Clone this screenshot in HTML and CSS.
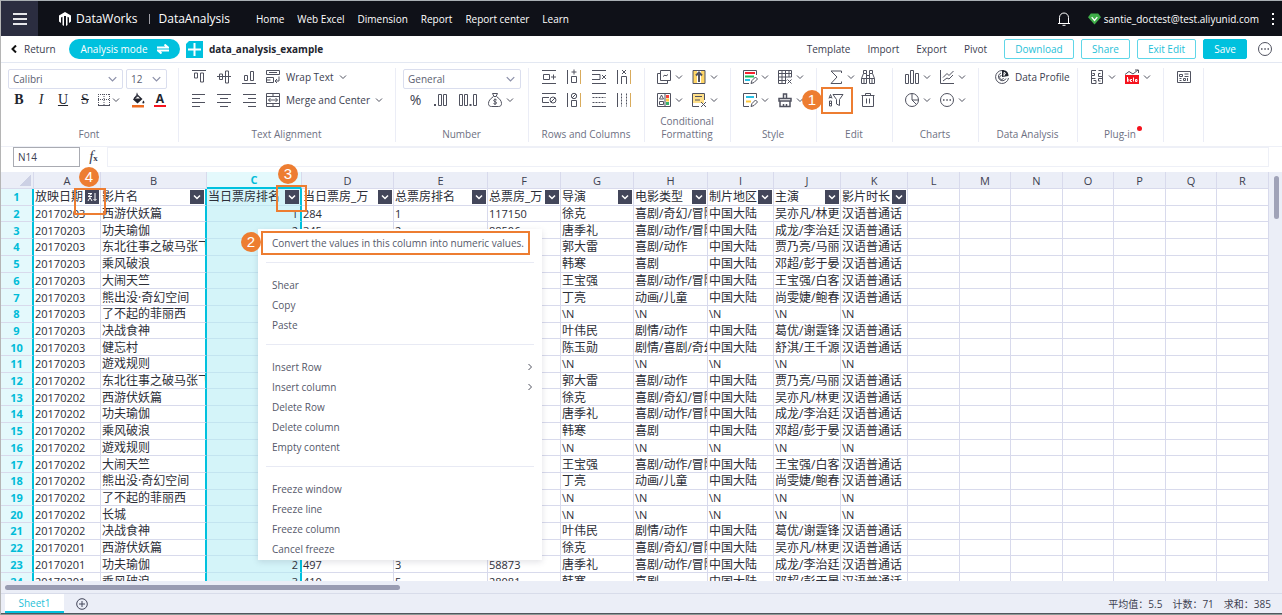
FILE: index.html
```
<!DOCTYPE html>
<html lang="en">
<head>
  <meta charset="UTF-8">
  <meta name="viewport" content="width=device-width, initial-scale=1.0">
  <title>DataWorks | DataAnalysis</title>
  <link rel="stylesheet" href="styles.css">
</head>
<body>
  <!-- icon set -->
  <svg class="sprite" aria-hidden="true">
    <symbol id="chev" viewBox="0 0 8 8"><path d="M1 2.5l3 3 3-3"/></symbol>
    <symbol id="border" viewBox="0 0 16 16"><path stroke-dasharray="1 1" d="M2 2.5h12M2 7.5h12M2.500 2v12M8 2v12M13.500 2v12"/><path d="M2 13.500h12"/></symbol>
    <symbol id="fill" viewBox="0 0 16 16"><path class="solid" d="M7 2l5.500 5-5 4.500L3 7.500z"/><path d="M7 5V.8M4 6l4-4" /><path class="paper" d="M5 6.500h5L8 4.500z"/><path class="solid" d="M13.500 8.500c1.500 2 1 3-.3 3s-1-1.500.3-3z"/><path fill="#ed6a1f" stroke="none" d="M2 13h12v2.500H2z"/></symbol>
    <symbol id="v-top" viewBox="0 0 16 16"><path d="M1 1.500h14M3.500 4v5h3V4zM9.500 4v9h3V4z"/></symbol>
    <symbol id="v-mid" viewBox="0 0 16 16"><path d="M1 7.500h14M3.500 5v5.500h3V5zM9.500 2v12h3V2z"/></symbol>
    <symbol id="v-bot" viewBox="0 0 16 16"><path d="M1 14.500h14M3.500 6.500v5h3v-5zM9.500 2.500v9h3v-9z"/></symbol>
    <symbol id="left" viewBox="0 0 16 16"><path d="M1 2.500h13M1 6.500h8M1 10.500h13M1 14.500h8"/></symbol>
    <symbol id="center" viewBox="0 0 16 16"><path d="M1 2.500h14M4 6.500h8M1 10.500h14M4 14.500h8"/></symbol>
    <symbol id="right" viewBox="0 0 16 16"><path d="M2 2.500h13M7 6.500h8M2 10.500h13M7 14.500h8"/></symbol>
    <symbol id="wrap" viewBox="0 0 16 16"><path d="M1.500 1.500h13v4h-13zM4 3.500h8M1.500 8.500h7v5h-7zM1.500 11h4M14 7.500V12h-4M12 10l-2 2 2 2"/></symbol>
    <symbol id="merge" viewBox="0 0 16 16"><path d="M1.500 1.500h13v13h-13zM1.500 4.500h13M1.500 11.500h13M8 1.500v3M8 11.500v3M3.500 8h9M5.500 6l-2 2 2 2M10.500 6l2 2-2 2"/></symbol>
    <symbol id="decimal" viewBox="0 0 16 16"><path stroke-width="2" d="M1 13h2"/><path d="M5.500 2.500h3v11h-3zM10.500 2.500h3v11h-3z"/></symbol>
    <symbol id="decimal2" viewBox="0 0 20 16"><path d="M1.500 2.500h3v11h-3zM6.500 2.500h3v11h-3zM15.500 2.500h3v11h-3z"/><path stroke-width="2" d="M11.500 13h2"/></symbol>
    <symbol id="money" viewBox="0 0 16 16"><path d="M5.500 1.500h5l-1.500 3h-2zM6.500 4.500C3 7 1.500 9 1.500 11.500c0 2 1 3 3 3h7c2 0 3-1 3-3 0-2.500-1.500-4.500-5-7M9.700 8C8.500 7 6.500 7.500 6.700 8.700 7 10 9.500 9.300 9.500 11c0 1.200-2 1.300-3 .5M8 6.500v6.500"/></symbol>
    <symbol id="row-add" viewBox="0 0 16 16"><path d="M1 1.500h14M1 14.500h14M2.500 5.500h6v5h-6zM10 8h5M12.500 5.500v5"/></symbol>
    <symbol id="col-add" viewBox="0 0 16 16"><path d="M1.500 1v14M5.500 7.500h5v6h-5zM8 .5v5M5.500 3h5"/><path class="gold" d="M14.500 1v14"/></symbol>
    <symbol id="row-del" viewBox="0 0 16 16"><path d="M1 1.500h14M1 14.500h14M1 5.500h8v5H1M11 6l4 4M15 6l-4 4"/></symbol>
    <symbol id="col-del" viewBox="0 0 16 16"><path d="M1.500 1v14M5.500 15V7.500h5V15M6 1l4 4M10 1L6 5"/><path class="gold" d="M14.500 1v14"/></symbol>
    <symbol id="row-hide" viewBox="0 0 16 16"><path d="M1 1.500h14M1 14.500h14M8 5.500H1.500v5H8"/><circle cx="12" cy="8" r="3"/><path d="M10 10l4-4"/></symbol>
    <symbol id="col-hide" viewBox="0 0 16 16"><path d="M1.500 1v14M5.500 8.500h5v6h-5z"/><circle cx="8" cy="4" r="2.700"/><path d="M6 6l4-4"/><path class="gold" d="M14.500 1v14"/></symbol>
    <symbol id="row-show" viewBox="0 0 16 16"><path d="M1 1.500h14M1 14.500h14"/><path stroke-dasharray="2 1" d="M1.500 5.500h13M1.500 10.500h13"/></symbol>
    <symbol id="col-show" viewBox="0 0 16 16"><path d="M1.500 1v14"/><path stroke-dasharray="2 1" d="M5.500 1.500v13M10.500 1.500v13"/><path class="gold" d="M14.500 1v14"/></symbol>
    <symbol id="cond" viewBox="0 0 16 16"><path d="M4.500 1.500h10v10h-10zM4 4.500H1.500v10h10V12M7 7.500l2-1.500 1 1L12 5.500"/></symbol>
    <symbol id="rule" viewBox="0 0 16 16"><path fill="#ffd666" stroke="none" d="M2 2h4v12H2zM10 2h4v12h-4z"/><path d="M2 1.500h12v13H2z"/><path stroke-width="2" d="M8 13V4M5 6.500L8 3.500l3 3"/></symbol>
    <symbol id="scale" viewBox="0 0 16 16"><path d="M1.500 1.500h13v13h-13zM3.500 7L5.500 3l2 4zM3.500 9.500h4v3h-4zM9 2v12"/><path fill="#f5433c" stroke="none" d="M10 3h3v3h-3z"/><path fill="#ffc83d" stroke="none" d="M10 6.500h3v3h-3z"/><path fill="#38b26c" stroke="none" d="M10 10h3v3h-3z"/></symbol>
    <symbol id="rule-del" viewBox="0 0 16 16"><path fill="#ffe08a" stroke="none" d="M2 2h11v9H2z"/><path d="M13.500 8V1.500h-12v13H8M4 4.500h7M4 8h5M10 10l5 5M15 10l-5 5"/></symbol>
    <symbol id="style" viewBox="0 0 16 16"><path d="M14.500 6V1.500h-13v13H7"/><path stroke="#f5232d" stroke-width="2" d="M3 4h10"/><path stroke="#19b955" stroke-width="2" d="M3 7.500h9"/><path stroke="#28bfe3" stroke-width="2" d="M3 11h5"/><path d="M9 14.500l1-3 3.500-3.500 2 2-3.500 3.500z"/></symbol>
    <symbol id="style2" viewBox="0 0 16 16"><path d="M14.500 6V1.500h-13v13H7"/><path stroke="#28bfe3" stroke-width="2" d="M4 5h8"/><path stroke="#ffc83d" stroke-width="2" d="M4 9.500h5"/><path d="M9 14.500l1-3 3.500-3.500 2 2-3.500 3.500z"/></symbol>
    <symbol id="tbl" viewBox="0 0 16 16"><path d="M14.500 8V1.500h-13v13H9M1.500 4.500h13M1.500 8h13M1.500 11.500h8M5 1.500v13M8.500 1.500v13M12 1.500V8M10.500 10.500l4 4M14.500 10.500l-4 4"/></symbol>
    <symbol id="brush" viewBox="0 0 16 16"><path stroke-width="1.500" d="M6.500 6V2h3v4M2 9V6.500h12V9zM3 9v5.500h10V9M6.500 14.500V12M9.500 14.500V12"/></symbol>
    <symbol id="sum" viewBox="0 0 16 16"><path d="M13.500 4V2H3l6 6-6 6.500h10.500v-2"/></symbol>
    <symbol id="find" viewBox="0 0 16 16"><path d="M3.500 1.500h3v3h-3zM9.500 1.500h3v3h-3zM3.500 4.500l-2 5v5h5v-10M12.500 4.500l2 5v5h-5v-10M6.500 6.500h3M6.500 9.500h3M1.500 9.500h5M9.500 9.500h5M4 10v4M12 10v4"/></symbol>
    <symbol id="filter" viewBox="0 0 16 16"><path d="M5 2.500h10L11.500 7.500v6l-3-1.500V7.500zM1 6.500l1.500-4 1.500 4M1.500 5.500h2M1.500 9h2v5h-2zM1.500 11.500h2"/></symbol>
    <symbol id="trash" viewBox="0 0 16 16"><path d="M1.500 3.500h13M5.500 3.500v-2h5v2M2.500 3.500v11h11v-11M6.500 6.500v5M9.500 6.500v5"/></symbol>
    <symbol id="bars" viewBox="0 0 16 16"><path d="M1.500 5.500h3v9h-3zM6.500 1.500h3v13h-3zM11.500 4.500h3v10h-3z"/></symbol>
    <symbol id="lines" viewBox="0 0 16 16"><path d="M1.500 1v13.500H15M4 8.500l4-4 2 2 4.500-4.500M4 12l4-3 2 1 4-4"/></symbol>
    <symbol id="pie" viewBox="0 0 16 16"><circle cx="8" cy="8" r="6.500"/><path d="M8 1.500V8h6.500M8 8l4.500 4.500"/></symbol>
    <symbol id="more" viewBox="0 0 16 16"><circle cx="8" cy="8" r="6.500"/><path stroke-width="1.500" d="M4 8h1.500M7.300 8h1.500M10.500 8H12"/></symbol>
    <symbol id="profile" viewBox="0 0 16 16"><path d="M8 1.500A6.500 6.500 0 1 0 14.500 9M7 4a4 4 0 1 0 5 5.500M7.500 6.500A2 2 0 1 0 9.500 9"/><path class="solid" d="M8 8V1c4 0 6.500 2 6.500 6z"/><path stroke="#fff" d="M10 7V3.500c2 0 2 2 0 2"/></symbol>
    <symbol id="plugin" viewBox="0 0 16 16"><path d="M7 1.500H2.500v5h3v-2h-2M2.500 6.500v8H7v-3H4.500M9.500 1.500h4v6h-4v-3h2M13.500 7.500v3M9.500 14.500h4v-5h-4v2.500h2M2.500 9.500h4"/></symbol>
    <symbol id="beta" viewBox="0 0 16 16"><path d="M1 5.500l4-3 4 2.500 5-4M11 1h3.500v3"/><path fill="#f5121d" stroke="none" d="M1 6h14v9H1z"/><path stroke="#fff" d="M3.500 8v4.500c2 0 2-2.500 0-2.500M8 10.500H6.500v2H8M9.500 8.500v4M11.500 12.500v-2H13v2z"/></symbol>
    <symbol id="panel" viewBox="0 0 16 16"><path d="M1.500 2.500h13v11h-13zM3.500 5.500h3v2h-3zM8.500 5h4M8.500 7.500h4M3.500 9.500h2M3.500 11.500h2M7.500 9.500h2v2h-2zM11.500 9v3"/></symbol>
  </svg>

  <header class="topbar">
    <button class="burger" aria-label="Menu"><i></i><i></i><i></i></button>
    <div class="brand">
      <svg class="logo" viewBox="0 0 14 14"><path d="M1 3.500L7 0l6 3.500v6L11 11V5.500L9.500 4.800V13L8 14V4H6v10l-1.500-1V4.800L3 5.500V11L1 9.500z"/></svg>
      <span>DataWorks</span><i></i><span>DataAnalysis</span>
    </div>
    <nav>
      <a href="#">Home</a>
      <a href="#">Web Excel</a>
      <a href="#">Dimension</a>
      <a href="#">Report</a>
      <a href="#">Report center</a>
      <a href="#">Learn</a>
    </nav>
    <div class="user">
      <svg class="bell" viewBox="0 0 12 14"><path d="M0 11.500h12M1.500 11V5.500a4.500 4.500 0 0 1 9 0V11M4.500 13.300h3"/></svg>
      <svg class="gem" viewBox="0 0 14 12"><path fill="#3fae49" d="M3 0h8l3 4-7 8-7-8z"/><path fill="none" stroke="#fff" stroke-width="1.500" d="M4 4l3 3.500L10 4"/></svg>
      <span>santie_doctest@test.aliyunid.com</span>
      <svg class="dots" viewBox="0 0 4 14"><path d="M1 1h2v2H1zM1 6h2v2H1zM1 11h2v2H1z"/></svg>
    </div>
  </header>

  <div class="filebar">
    <a class="return" href="#"><svg viewBox="0 0 6 8"><path d="M5 .5L1.500 4 5 7.500"/></svg>Return</a>
    <button class="mode">Analysis mode <svg viewBox="0 0 12 10"><path d="M0 3.500h11L7.500 .5M12 6.500H1l3.500 3"/></svg></button>
    <svg class="sheet-icon" viewBox="0 0 17 17"><path fill="#00c1de" d="M3 0h14v17H0V3z"/><path stroke="#fff" stroke-width="2" d="M8.500 2v13M2 8.500h13"/></svg>
    <h1>data_analysis_example</h1>
    <div class="actions">
      <a href="#">Template</a>
      <a href="#">Import</a>
      <a href="#">Export</a>
      <a href="#">Pivot</a>
      <button class="btn download">Download</button>
      <button class="btn">Share</button>
      <button class="btn exit">Exit Edit</button>
      <button class="btn primary">Save</button>
      <button class="more" aria-label="More"><svg class="ic"><use href="#more"/></svg></button>
    </div>
  </div>

  <div class="ribbon">
    <section class="group g-font">
      <div class="row fields">
        <label class="select family"><select aria-label="Font family"><option>Calibri</option></select><svg><use href="#chev"/></svg></label>
        <label class="select size"><select aria-label="Font size"><option>12</option></select><svg><use href="#chev"/></svg></label>
      </div>
      <div class="row letters">
        <button class="tool"><b>B</b></button>
        <button class="tool"><em>I</em></button>
        <button class="tool"><u>U</u></button>
        <button class="tool"><s>S</s></button>
        <button class="tool drop"><svg class="ic"><use href="#border"/></svg><svg class="chev"><use href="#chev"/></svg></button>
        <button class="tool"><svg class="ic"><use href="#fill"/></svg></button>
        <button class="tool"><span class="color">A</span></button>
      </div>
      <h2>Font</h2>
    </section>
    <section class="group g-align">
      <div class="row">
        <button class="tool"><svg class="ic"><use href="#v-top"/></svg></button>
        <button class="tool"><svg class="ic"><use href="#v-mid"/></svg></button>
        <button class="tool"><svg class="ic"><use href="#v-bot"/></svg></button>
        <button class="tool text"><svg class="ic"><use href="#wrap"/></svg>Wrap Text<svg class="chev"><use href="#chev"/></svg></button>
      </div>
      <div class="row">
        <button class="tool"><svg class="ic"><use href="#left"/></svg></button>
        <button class="tool"><svg class="ic"><use href="#center"/></svg></button>
        <button class="tool"><svg class="ic"><use href="#right"/></svg></button>
        <button class="tool text"><svg class="ic"><use href="#merge"/></svg>Merge and Center<svg class="chev"><use href="#chev"/></svg></button>
      </div>
      <h2>Text Alignment</h2>
    </section>
    <section class="group g-number">
      <div class="row fields">
        <label class="select format"><select aria-label="Number format"><option>General</option></select><svg><use href="#chev"/></svg></label>
      </div>
      <div class="row">
        <button class="tool percent">%</button>
        <button class="tool"><svg class="ic"><use href="#decimal"/></svg></button>
        <button class="tool long"><svg class="ic wide"><use href="#decimal2"/></svg></button>
        <button class="tool drop"><svg class="ic"><use href="#money"/></svg><svg class="chev"><use href="#chev"/></svg></button>
      </div>
      <h2>Number</h2>
    </section>
    <section class="group g-rows">
      <div class="row">
        <button class="tool"><svg class="ic"><use href="#row-add"/></svg></button>
        <button class="tool"><svg class="ic"><use href="#col-add"/></svg></button>
        <button class="tool"><svg class="ic"><use href="#row-del"/></svg></button>
        <button class="tool"><svg class="ic"><use href="#col-del"/></svg></button>
      </div>
      <div class="row">
        <button class="tool"><svg class="ic"><use href="#row-hide"/></svg></button>
        <button class="tool"><svg class="ic"><use href="#col-hide"/></svg></button>
        <button class="tool"><svg class="ic"><use href="#row-show"/></svg></button>
        <button class="tool"><svg class="ic"><use href="#col-show"/></svg></button>
      </div>
      <h2>Rows and Columns</h2>
    </section>
    <section class="group g-pair">
      <div class="row">
        <button class="tool drop"><svg class="ic"><use href="#cond"/></svg><svg class="chev"><use href="#chev"/></svg></button>
        <button class="tool drop"><svg class="ic"><use href="#rule"/></svg><svg class="chev"><use href="#chev"/></svg></button>
      </div>
      <div class="row">
        <button class="tool drop"><svg class="ic"><use href="#scale"/></svg><svg class="chev"><use href="#chev"/></svg></button>
        <button class="tool drop"><svg class="ic"><use href="#rule-del"/></svg><svg class="chev"><use href="#chev"/></svg></button>
      </div>
      <h2>Conditional<br>Formatting</h2>
    </section>
    <section class="group g-pair">
      <div class="row">
        <button class="tool drop"><svg class="ic"><use href="#style"/></svg><svg class="chev"><use href="#chev"/></svg></button>
        <button class="tool drop"><svg class="ic"><use href="#tbl"/></svg><svg class="chev"><use href="#chev"/></svg></button>
      </div>
      <div class="row">
        <button class="tool drop"><svg class="ic"><use href="#style2"/></svg><svg class="chev"><use href="#chev"/></svg></button>
        <button class="tool drop"><svg class="ic"><use href="#brush"/></svg><svg class="chev"><use href="#chev"/></svg></button>
      </div>
      <h2>Style</h2>
    </section>
    <section class="group g-edit">
      <div class="row">
        <button class="tool drop"><svg class="ic"><use href="#sum"/></svg><svg class="chev"><use href="#chev"/></svg></button>
        <button class="tool drop"><svg class="ic"><use href="#find"/></svg></button>
      </div>
      <div class="row">
        <button class="tool drop filter-btn"><svg class="ic"><use href="#filter"/></svg><span class="frame"></span><span class="step">1</span></button>
        <button class="tool drop"><svg class="ic"><use href="#trash"/></svg></button>
      </div>
      <h2>Edit</h2>
    </section>
    <section class="group g-pair">
      <div class="row">
        <button class="tool drop"><svg class="ic"><use href="#bars"/></svg><svg class="chev"><use href="#chev"/></svg></button>
        <button class="tool drop"><svg class="ic"><use href="#lines"/></svg><svg class="chev"><use href="#chev"/></svg></button>
      </div>
      <div class="row">
        <button class="tool drop"><svg class="ic"><use href="#pie"/></svg><svg class="chev"><use href="#chev"/></svg></button>
        <button class="tool drop"><svg class="ic"><use href="#more"/></svg><svg class="chev"><use href="#chev"/></svg></button>
      </div>
      <h2>Charts</h2>
    </section>
    <section class="group g-data">
      <div class="row">
        <button class="tool text"><svg class="ic"><use href="#profile"/></svg>Data Profile</button>
      </div>
      <h2>Data Analysis</h2>
    </section>
    <section class="group g-pair">
      <div class="row">
        <button class="tool drop"><svg class="ic"><use href="#plugin"/></svg><svg class="chev"><use href="#chev"/></svg></button>
        <button class="tool drop"><svg class="ic"><use href="#beta"/></svg><svg class="chev"><use href="#chev"/></svg></button>
      </div>
      <h2><span class="new">Plug-in</span></h2>
    </section>
    <section class="group g-last">
      <div class="row">
        <button class="tool"><svg class="ic"><use href="#panel"/></svg></button>
      </div>
    </section>
  </div>

  <div class="formula">
    <input class="cell-name" value="N14" aria-label="Cell">
    <span class="fx"><i>f</i><b>x</b></span>
    <input class="cell-value" value="" aria-label="Formula">
  </div>

  <main class="sheet">
    <div class="viewport">
      <table id="grid"></table>
    </div>
    <div class="vscroll"><span></span></div>

    <ul class="menu">
      <li class="first">Convert the values in this column into numeric values.<span class="frame"></span><span class="step">2</span></li>
      <li class="sep"></li>
      <li>Shear</li>
      <li>Copy</li>
      <li>Paste</li>
      <li class="sep"></li>
      <li class="sub">Insert Row<svg class="chev"><use href="#chev"/></svg></li>
      <li class="sub">Insert column<svg class="chev"><use href="#chev"/></svg></li>
      <li>Delete Row</li>
      <li>Delete column</li>
      <li>Empty content</li>
      <li class="sep"></li>
      <li>Freeze window</li>
      <li>Freeze line</li>
      <li>Freeze column</li>
      <li>Cancel freeze</li>
    </ul>

    <div class="callout c3"><span class="step">3</span></div>
    <div class="callout c4"><span class="step">4</span></div>
  </main>

  <div class="hscroll"><span></span></div>
  <footer class="tabs">
    <a class="tab" href="#">Sheet1</a>
    <button class="add" aria-label="Add sheet"><svg viewBox="0 0 12 12"><circle cx="6" cy="6" r="5.300"/><path d="M6 3v6M3 6h6"/></svg></button>
    <div class="totals"><span>平均值：5.5</span><span>计数：71</span><span>求和：385</span></div>
  </footer>

  <script src="script.js"></script>
</body>
</html>
```

FILE: styles.css
```
* {
  box-sizing: border-box;
}
body {
  margin: 0;
  height: 100vh;
  display: flex;
  flex-direction: column;
  overflow: hidden;
  font-family: "Open Sans", "Noto Sans CJK SC", sans-serif;
  font-size: 10px;
  line-height: 16px;
  color: #3c4050;
  background: #fff;
  border-top: 1px solid #a9afb3;
  border-left: 1px solid #b5b5b5;
  border-bottom: 1px solid #8d9a96;
}
button, input, select {
  font: inherit;
  color: inherit;
}
button {
  padding: 0;
  border: 0;
  background: none;
}
a {
  color: inherit;
  text-decoration: none;
}
.sprite {
  position: absolute;
  width: 0;
  height: 0;
}

/* top bar */
.topbar {
  height: 35px;
  flex: none;
  display: flex;
  align-items: center;
  background: #0f1118;
  color: #fff;
}
.burger {
  width: 37px;
  height: 35px;
  background: #2b2d40;
  display: flex;
  flex-direction: column;
  align-items: center;
  justify-content: center;
  gap: 3px;
}
.burger i {
  width: 14px;
  height: 2px;
  background: #e6e6ea;
}
.brand {
  display: flex;
  align-items: center;
  margin-left: 20px;
  width: 198px;
  font-size: 12px;
  font-weight: 500;
}
.logo {
  width: 14px;
  height: 14px;
  fill: #fff;
  margin-right: 4px;
}
.brand i {
  width: 1px;
  height: 10px;
  background: #a0a0a8;
  margin: 0 9px 0 11px;
}
.topbar nav {
  display: flex;
  gap: 13px;
}
.user {
  margin-left: auto;
  display: flex;
  align-items: center;
  padding-right: 7px;
}
.bell {
  width: 12px;
  height: 14px;
  fill: none;
  stroke: #fff;
  margin-right: 18px;
}
.gem {
  width: 13px;
  height: 12px;
  margin-right: 3px;
}
.dots {
  width: 4px;
  height: 14px;
  fill: #fff;
  margin-left: 12px;
}

/* file bar */
.filebar {
  height: 27px;
  flex: none;
  display: flex;
  align-items: center;
  border-bottom: 1px solid #e3e8f2;
}
.return {
  width: 68px;
  display: flex;
  align-items: center;
  padding-left: 10px;
}
.return svg {
  width: 6px;
  height: 8px;
  margin-right: 7px;
  fill: none;
  stroke: #111;
  stroke-width: 2;
}
.mode {
  width: 111px;
  height: 20px;
  border-radius: 10px;
  background: #00c1de;
  color: #fff;
  display: flex;
  align-items: center;
  justify-content: center;
  gap: 9px;
}
.mode svg {
  width: 12px;
  height: 10px;
  fill: none;
  stroke: #fff;
  stroke-width: 2;
}
.sheet-icon {
  width: 17px;
  height: 17px;
  margin: 0 6px;
}
.filebar h1 {
  margin: 0;
  font-size: 10px;
  font-weight: 700;
  color: #22242e;
}
.actions {
  margin-left: auto;
  padding-right: 9px;
  display: flex;
  align-items: center;
}
.actions a {
  margin-right: 17px;
}
.actions .btn {
  height: 20px;
  width: 49px;
  margin-right: 7px;
  border: 1px solid #5fd6e8;
  border-radius: 2px;
  color: #1fbfd8;
}
.actions .download {
  width: 70px;
}
.actions .exit {
  width: 59px;
}
.actions .primary {
  width: 44px;
  margin-right: 10px;
  background: #00c1de;
  border-color: #00c1de;
  color: #fff;
}
.actions .more {
  display: flex;
}

/* ribbon */
.ribbon {
  flex: none;
  display: flex;
  height: 84px;
  padding: 5px 0 4px;
  border-bottom: 1px solid #eef0f7;
}
.group {
  flex: none;
  position: relative;
  display: flex;
  flex-direction: column;
  gap: 5px;
  padding: 0 0 0 11px;
  border-right: 1px solid #ebedf6;
}
.group h2 {
  margin: auto 0 1px -11px;
  padding-right: 1px;
  font-size: 10px;
  font-weight: 400;
  line-height: 13px;
  text-align: center;
  color: #6d7082;
}
.row {
  display: flex;
  height: 18px;
  align-items: center;
}
.fields {
  height: 22px;
  margin-bottom: -4px;
}
.tool {
  width: 25px;
  height: 18px;
  display: flex;
  align-items: center;
  justify-content: center;
}
.tool.drop {
  width: 35px;
  justify-content: flex-start;
  gap: 3px;
}
.tool.text {
  width: auto;
  gap: 5px;
  margin-left: 4px;
}
.ic {
  flex: none;
  width: 16px;
  height: 16px;
  fill: none;
  stroke: #50525f;
}
.ic.wide {
  width: 20px;
}
.solid {
  fill: #22242e;
  stroke: none;
}
.paper {
  fill: #fff;
  stroke: none;
}
.gold {
  stroke: #d9ab5c;
}
.chev {
  flex: none;
  width: 8px;
  height: 8px;
  fill: none;
  stroke: #50525f;
}
.select {
  position: relative;
  display: flex;
}
.select select {
  width: 100%;
  height: 20px;
  padding: 0 4px;
  appearance: none;
  border: 1px solid #dadeee;
  border-radius: 2px;
  background: #fff;
  color: #5b5e70;
}
.select svg {
  position: absolute;
  right: 5px;
  top: 5px;
  width: 11px;
  height: 10px;
  fill: none;
  stroke: #8b8fa8;
}
.g-font {
  width: 178px;
  padding-left: 7px;
}
.g-font h2 {
  margin-left: -7px;
}
.g-font .family {
  width: 115px;
  margin-right: 3px;
}
.g-font .size {
  width: 41px;
}
.letters .tool {
  width: 22px;
  font-family: "Liberation Serif", serif;
  font-size: 14px;
  color: #22242e;
}
.letters .drop {
  width: 31px;
  gap: 0;
}
.color {
  width: 12px;
  font-family: "Open Sans", sans-serif;
  font-size: 12px;
  font-weight: 700;
  line-height: 12px;
  border-bottom: 2px solid #f5121d;
}
.g-align {
  width: 217px;
}
.g-align, .g-rows, .g-number {
  padding-left: 7px;
}
.g-align h2, .g-rows h2, .g-number h2 {
  margin-left: -7px;
}
.g-number {
  width: 133px;
}
.g-number .format {
  width: 118px;
}
.tool.percent {
  font-size: 14px;
}
.tool.long {
  width: 30px;
  margin-right: 4px;
}
.g-rows {
  width: 116px;
}
.g-pair {
  width: 86px;
}
.g-edit {
  width: 76px;
}
.g-data {
  width: 99px;
}
.g-last {
  width: 40px;
  padding-left: 7px;
}
.new {
  position: relative;
}
.new::after {
  content: "";
  position: absolute;
  right: -6px;
  top: -1px;
  width: 5px;
  height: 5px;
  border-radius: 50%;
  background: #f5121d;
}

/* numbered steps */
.frame, .callout {
  position: absolute;
  border: 2px solid #ed7d31;
}
.step {
  position: absolute;
  width: 20px;
  height: 20px;
  border-radius: 50%;
  background: #ed7d31;
  color: #fff;
  font-family: "Liberation Sans", sans-serif;
  font-size: 15px;
  line-height: 20px;
  text-align: center;
}
.filter-btn {
  position: relative;
}
.filter-btn .frame {
  left: -7px;
  top: -4px;
  width: 32px;
  height: 27px;
}
.filter-btn .step {
  left: -26px;
  top: -1px;
}

/* formula bar */
.formula {
  flex: none;
  display: flex;
  align-items: center;
  height: 25px;
  padding: 0 13px 5px 12px;
}
.formula input {
  height: 20px;
  border: 1px solid #eef0f7;
  padding: 0 4px;
  background: #fff;
}
.formula .cell-name {
  width: 67px;
  border: 1px solid #a9abb2;
}
.fx {
  width: 27px;
  text-align: center;
  font-family: "Liberation Serif", serif;
  font-size: 15px;
}
.fx b {
  font-size: 9px;
}
.formula .cell-value {
  flex: 1;
}

/* sheet */
.sheet {
  flex: 1;
  min-height: 0;
  position: relative;
  display: flex;
  background: #ebeef7;
}
.viewport {
  flex: 1;
  overflow: hidden;
}
#grid {
  table-layout: fixed;
  border-collapse: separate;
  border-spacing: 0;
  height: 418px;
  width: 1px;
  background: #fff;
  font-size: 11px;
}
#grid th, #grid td {
  padding: 0;
  line-height: 14px;
  border-right: 1px solid #d8daec;
  border-bottom: 1px solid #d8daec;
  white-space: nowrap;
  overflow: hidden;
}
#grid th {
  padding-top: 1px;
}
#grid thead th {
  background: #ebeef7;
  font-weight: 400;
}
#grid thead .corner {
  background: linear-gradient(135deg, transparent 50%, #ccd0e4 50%) no-repeat 18px 2px / 12px 12px, #ebeef7;
}
#grid tbody th {
  background: #e4f9fc;
  color: #00bcd8;
  font-weight: 700;
  border-right: 2px solid #00c1de;
}
#grid td {
  padding-top: 1px;
  padding-left: 1px;
  color: #2c2e38;
  font-size: 12px;
}
#grid td.num {
  font-size: 11px;
}
#grid .sel {
  background: #d4f4f9;
  border-right: 2px solid #00c1de;
  border-bottom-color: #c3e4f0;
  text-align: right;
  padding-right: 2px;
}
#grid td.sel.title {
  padding-right: 0;
}
#grid thead .sel {
  background: #e4f9fc;
  color: #00bcd8;
  font-weight: 700;
  text-align: center;
  padding-right: 0;
  border-right: 1px solid #d8daec;
  border-bottom: 2px solid #00c1de;
}
#grid .before-sel {
  border-right: 2px solid #00c1de;
}
.head {
  display: flex;
  align-items: center;
  height: 14px;
}
.head span {
  flex: 1;
  text-align: left;
  white-space: nowrap;
  overflow: hidden;
}
.head button {
  flex: none;
  width: 14px;
  height: 14px;
  margin-right: 1px;
  background: #43465a;
  display: flex;
  align-items: center;
  justify-content: center;
}
.head svg {
  width: 10px;
  height: 10px;
  fill: none;
  stroke: #fff;
}
.vscroll {
  width: 12px;
  padding: 4px 4px;
}
.vscroll span {
  display: block;
  width: 5px;
  height: 43px;
  border-radius: 3px;
  background: #a0a3b8;
}
.hscroll {
  flex: none;
  height: 12px;
  padding: 4px;
  background: #ebeef7;
}
.hscroll span {
  display: block;
  width: 31%;
  height: 5px;
  border-radius: 3px;
  background: #999cb2;
}
.c3 {
  left: 275px;
  top: 13px;
  width: 31px;
  height: 27px;
}
.c3 .step {
  left: 0;
  top: -23px;
}
.c4 {
  left: 73px;
  top: 16px;
  width: 32px;
  height: 27px;
}
.c4 .step {
  left: 3px;
  top: -23px;
}

/* context menu */
.menu {
  position: absolute;
  left: 257px;
  top: 57px;
  width: 284px;
  margin: 0;
  padding: 4px 8px 1px;
  list-style: none;
  background: #fff;
  box-shadow: 0 2px 6px rgba(60, 60, 90, 0.15);
  color: #55586a;
}
.menu li {
  position: relative;
  height: 20px;
  line-height: 20px;
  padding-left: 6px;
  white-space: nowrap;
}
.menu .sep {
  height: 22px;
  padding: 0;
}
.menu .sep::before {
  content: "";
  display: block;
  padding-top: 9px;
  border-bottom: 1px solid #e8eaf4;
}
.menu .sub {
  display: flex;
  align-items: center;
  justify-content: space-between;
}
.menu .sub .chev {
  transform: rotate(-90deg);
}
.menu .frame {
  left: -5px;
  top: -2px;
  width: 269px;
  height: 24px;
}
.menu .step {
  left: -25px;
  top: -1px;
}

/* sheet tabs */
.tabs {
  flex: none;
  height: 21px;
  display: flex;
  align-items: center;
  padding: 0 11px 0 4px;
  background: #ebeef7;
  border-top: 1px solid #d8dcea;
  border-bottom: 1px solid #50565e;
}
.tab {
  width: 59px;
  height: 19px;
  line-height: 19px;
  text-align: center;
  background: #fff;
  color: #1fbfd8;
  border-bottom: 2px solid #00c1de;
}
.add {
  width: 12px;
  height: 12px;
  margin-left: 12px;
}
.add svg {
  display: block;
  fill: none;
  stroke: #43465a;
}
.totals {
  margin-left: auto;
  display: flex;
  gap: 10px;
}
```

FILE: script.js
```
const widths = [33, 67, 106, 95, 92, 94, 73, 73, 74, 66, 67, 67, 52, 51, 52, 51, 52, 51, 52];
const letters = 'ABCDEFGHIJKLMNOPQR'.split('');
const heads = ['放映日期', '影片名', '当日票房排名', '当日票房_万', '总票房排名', '总票房_万', '导演', '电影类型', '制片地区', '主演', '影片时长'];

// director, genre, region, cast, language
const films = {
  '西游伏妖篇': ['徐克', '喜剧/奇幻/冒险', '中国大陆', '吴亦凡/林更新', '汉语普通话'],
  '功夫瑜伽': ['唐季礼', '喜剧/动作/冒险', '中国大陆', '成龙/李治廷', '汉语普通话'],
  '东北往事之破马张飞': ['郭大雷', '喜剧/动作', '中国大陆', '贾乃亮/马丽', '汉语普通话'],
  '乘风破浪': ['韩寒', '喜剧', '中国大陆', '邓超/彭于晏', '汉语普通话'],
  '大闹天竺': ['王宝强', '喜剧/动作/冒险', '中国大陆', '王宝强/白客', '汉语普通话'],
  '熊出没·奇幻空间': ['丁亮', '动画/儿童', '中国大陆', '尚雯婕/鲍春来', '汉语普通话'],
  '决战食神': ['叶伟民', '剧情/动作', '中国大陆', '葛优/谢霆锋', '汉语普通话'],
  '健忘村': ['陈玉勋', '剧情/喜剧/奇幻', '中国大陆', '舒淇/王千源', '汉语普通话']
};
const none = ['\\N', '\\N', '\\N', '\\N', '\\N'];

const days = {
  '20170203': ['西游伏妖篇', '功夫瑜伽', '东北往事之破马张飞', '乘风破浪', '大闹天竺', '熊出没·奇幻空间', '了不起的菲丽西', '决战食神', '健忘村', '遊戏规则'],
  '20170202': ['东北往事之破马张飞', '西游伏妖篇', '功夫瑜伽', '乘风破浪', '遊戏规则', '大闹天竺', '熊出没·奇幻空间', '了不起的菲丽西', '长城', '决战食神'],
  '20170201': ['西游伏妖篇', '功夫瑜伽', '乘风破浪']
};

// rank, daily box office, total rank, total box office
const sales = {
  2: ['1', '284', '1', '117150'],
  3: ['2', '345', '2', '88506'],
  23: ['2', '497', '3', '58873'],
  24: ['3', '410', '5', '28081']
};

const arrow = '<svg viewBox="0 0 10 10"><path stroke-width="1.500" d="M2 3.500l3 3 3-3"/></svg>';
const sorted = '<svg viewBox="0 0 10 10"><path d="M1 1.500h4L1 4.500h4M1 9l2-3.500L5 9M8 1v7.500M6.500 7L8 8.500 9.500 7"/></svg>';

function cls(i) {
  if (i === 2) return 'sel';
  return i === 1 ? 'before-sel' : '';
}

let html = '<colgroup>' + widths.map(w => `<col style="width:${w}px">`).join('') + '</colgroup>';
html += '<thead><tr><th class="corner"></th>';
html += letters.map((l, i) => `<th class="${i === 2 ? 'sel' : ''}">${l}</th>`).join('') + '</tr></thead><tbody>';

html += '<tr><th>1</th>' + letters.map((l, i) => {
  if (!heads[i]) return '<td></td>';
  return `<td class="title ${cls(i)}"><div class="head"><span>${heads[i]}</span><button aria-label="Filter">${i === 0 ? sorted : arrow}</button></div></td>`;
}).join('') + '</tr>';

let n = 2;
for (const day of Object.keys(days).sort().reverse()) {
  for (const film of days[day]) {
    const cells = [day, film, ...(sales[n] || ['', '', '', '']), ...(films[film] || none)];
    html += `<tr><th>${n}</th>` + letters.map((l, i) => {
      const v = cells[i] || '';
      const num = /^[\d\\]/.test(v) ? ' num' : '';
      return `<td class="${cls(i)}${num}">${v}</td>`;
    }).join('') + '</tr>';
    n++;
  }
}
document.getElementById('grid').innerHTML = html + '</tbody>';
```
